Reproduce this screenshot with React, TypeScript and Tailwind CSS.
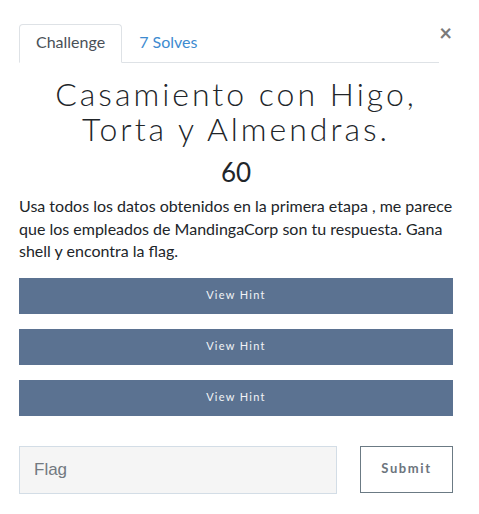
import React from 'react';

const hints = [1, 2, 3];

export default function App() {
  return (
    <div className="min-h-screen bg-white font-['Lato','Liberation_Sans',sans-serif] text-[#212529]">
      <div className="relative ml-[19px] w-[434px] pt-[24px]">
        <button className="absolute right-[1px] top-[22px] text-[22px] font-bold leading-none text-[#7a7a7a]">
          ×
        </button>

        <div className="mr-[14px] flex border-b border-[#dee2e6]">
          <div className="-mb-px flex h-[39px] items-center rounded-t-[4px] border border-b-white border-[#dee2e6] bg-white px-[16px] pb-[3px] text-[16px] text-[#495057]">
            Challenge
          </div>
          <div className="flex h-[38px] items-center px-[17px] pb-[3px] text-[16px] text-[#3d8bd0]">7 Solves</div>
        </div>

        <h2 className="mt-[13px] text-center text-[32px] font-light leading-[35px] tracking-[3px] text-[#212529]">
          Casamiento con Higo,
          <br />
          Torta y Almendras.
        </h2>
        <div className="mt-[11px] text-center text-[26px] font-normal leading-[30px] text-[#212529]">60</div>

        <p className="mt-[8px] text-[16px] leading-[22.5px] text-[#212529]">
          Usa todos los datos obtenidos en la primera etapa , me parece que los empleados de MandingaCorp son tu
          respuesta. Gana shell y encontra la flag.
        </p>

        <div className="mt-[15px] flex flex-col gap-[15px]">
          {hints.map((h) => (
            <button
              key={h}
              className="h-[36px] w-full bg-[#5b7291] text-[11px] tracking-[1.3px] text-[#f2f4f7]"
            >
              View Hint
            </button>
          ))}
        </div>

        <div className="mt-[30px] flex items-start justify-between">
          <input
            placeholder="Flag"
            className="h-[48px] w-[318px] border border-[#d3dde6] bg-[#f5f5f5] px-[14px] font-['Liberation_Sans',sans-serif] text-[17px] text-[#495057] placeholder:text-[#727980] outline-none"
          />
          <button className="h-[47px] w-[93px] border border-[#6b7a84] bg-white text-[13px] font-bold tracking-[1.6px] text-[#6c757d]">
            Submit
          </button>
        </div>
      </div>
    </div>
  );
}
